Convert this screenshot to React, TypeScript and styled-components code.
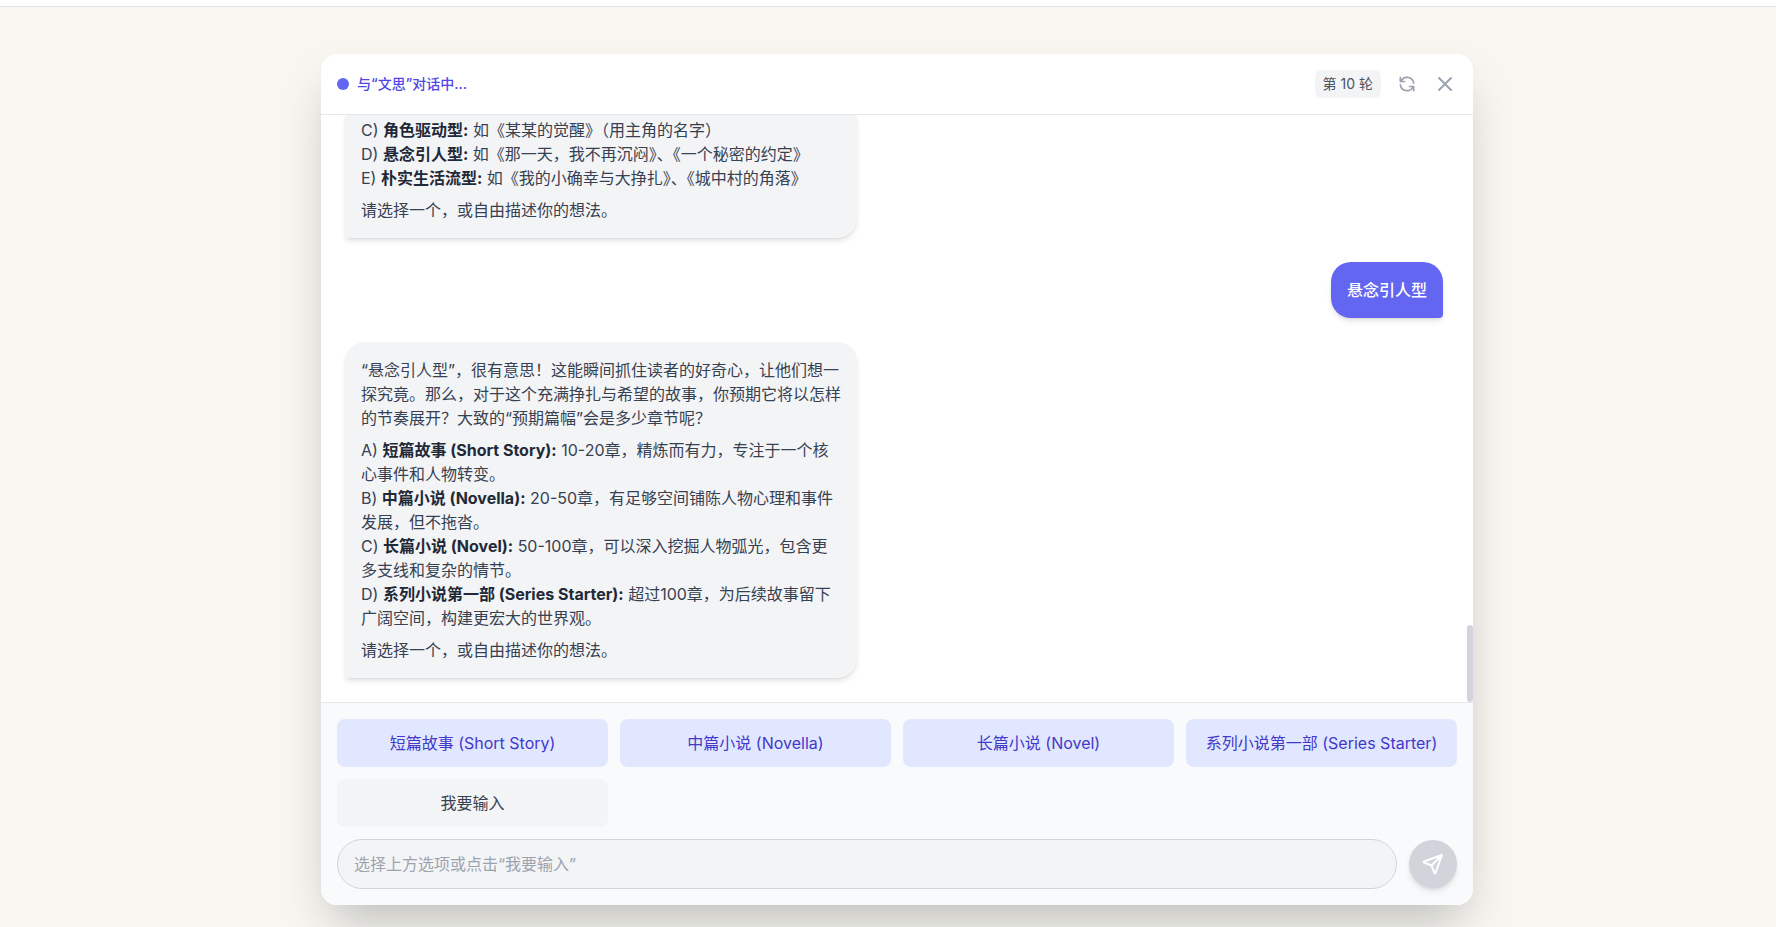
import React from 'react';
import styled, { createGlobalStyle } from 'styled-components';

const Global = createGlobalStyle`
  html, body { margin: 0; padding: 0; height: 100%; background: #f7f6f1; }
  #root { height: 100%; }
  * { box-sizing: border-box; }
  body { font-family: Inter, "Noto Sans CJK SC", "Noto Sans", sans-serif; }
`;

const Page = styled.div`
  height: 927px;
  display: flex;
  flex-direction: column;
  overflow: hidden;
`;
const TopBar = styled.div`
  height: 7px;
  flex: none;
  background: #fff;
  border-bottom: 1px solid #e2e6e3;
`;
const Stage = styled.main`
  flex: 1;
  min-height: 0;
  padding: 47px 303px 22px 321px;
`;
const Modal = styled.section`
  width: 1152px;
  height: 851px;
  display: flex;
  flex-direction: column;
  background: #fff;
  border-radius: 16px;
  overflow: hidden;
  box-shadow: 0 25px 50px -12px rgba(0, 0, 0, 0.25);
`;
const Header = styled.header`
  flex: none;
  height: 61px;
  display: flex;
  align-items: center;
  justify-content: space-between;
  padding: 0 16px;
  border-bottom: 1px solid #e5e7eb;
`;
const Status = styled.div`
  display: flex;
  align-items: center;
  gap: 8px;
  font-size: 14px;
  line-height: 20px;
  font-weight: 500;
  color: #4f46e5;
`;
const Dot = styled.span`
  flex: none;
  width: 12px;
  height: 12px;
  border-radius: 50%;
  background: #6366f1;
`;
const Tools = styled.div`
  display: flex;
  align-items: center;
  gap: 16px;
`;
const Round = styled.span`
  font-size: 14px;
  line-height: 20px;
  color: #4b5563;
  background: #f3f4f6;
  border-radius: 6px;
  padding: 4px 8px;
`;
const IconButton = styled.button`
  display: flex;
  border: 0;
  padding: 0;
  background: none;
  color: #9ca3af;
`;
const Messages = styled.div`
  position: relative;
  flex: 1;
  min-height: 0;
  overflow: hidden;
  display: flex;
  flex-direction: column;
  justify-content: flex-end;
  gap: 24px;
  padding: 0 30px 24px 24px;
`;
const Thumb = styled.div`
  position: absolute;
  right: 0;
  bottom: 0;
  width: 6px;
  height: 77px;
  border-radius: 3px;
  background: #d1d5db;
`;
const AgentBubble = styled.div`
  flex: none;
  width: 512px;
  padding: 16px;
  background: #f3f4f6;
  color: #374151;
  font-size: 16px;
  line-height: 24px;
  border-radius: 20px 20px 20px 4px;
  box-shadow: 0 4px 6px -1px rgba(0, 0, 0, 0.1), 0 2px 4px -2px rgba(0, 0, 0, 0.1);
`;
const Para = styled.p`
  margin: 0 0 8px;
  &:last-child { margin-bottom: 0; }
  strong { font-weight: 700; color: #1f2937; }
`;
const UserBubble = styled.div`
  flex: none;
  align-self: flex-end;
  padding: 16px;
  background: #6366f1;
  color: #fff;
  font-size: 16px;
  line-height: 24px;
  font-weight: 500;
  border-radius: 20px 20px 4px 20px;
  box-shadow: 0 4px 6px -1px rgba(0, 0, 0, 0.1), 0 2px 4px -2px rgba(0, 0, 0, 0.1);
`;
const Footer = styled.footer`
  flex: none;
  display: flex;
  flex-direction: column;
  gap: 12px;
  padding: 16px;
  background: #f9fafb;
  border-top: 1px solid #e5e7eb;
`;
const Options = styled.div`
  display: grid;
  grid-template-columns: repeat(4, 1fr);
  gap: 12px;
`;
const Option = styled.button<{ $muted?: boolean }>`
  height: 48px;
  border: 0;
  border-radius: 8px;
  padding: 0 0 2px;
  font: inherit;
  font-size: 16px;
  background: ${p => (p.$muted ? '#f3f4f6' : '#e0e7ff')};
  color: ${p => (p.$muted ? '#374151' : '#4338ca')};
`;
const InputRow = styled.div`
  display: flex;
  align-items: center;
  gap: 12px;
`;
const Input = styled.input`
  flex: 1;
  height: 50px;
  padding: 0 16px;
  border: 1px solid #d1d5db;
  border-radius: 25px;
  background: #f3f4f6;
  font: inherit;
  font-size: 16px;
  &::placeholder { color: #9ca3af; }
`;
const SendButton = styled.button`
  flex: none;
  width: 48px;
  height: 48px;
  border: 0;
  padding: 0;
  border-radius: 50%;
  display: flex;
  align-items: center;
  justify-content: center;
  background: #d1d5db;
  color: #fff;
  box-shadow: 0 4px 6px -1px rgba(0, 0, 0, 0.1), 0 2px 4px -2px rgba(0, 0, 0, 0.1);
`;
const Icon = styled.svg`
  display: block;
  fill: none;
  stroke: currentColor;
  stroke-width: 2;
  stroke-linecap: round;
  stroke-linejoin: round;
`;

const options = ['短篇故事 (Short Story)', '中篇小说 (Novella)', '长篇小说 (Novel)', '系列小说第一部 (Series Starter)'];

export default function App() {
  return (
    <Page>
      <Global />
      <TopBar />
      <Stage>
        <Modal>
          <Header>
            <Status>
              <Dot />
              与“文思”对话中...
            </Status>
            <Tools>
              <Round>第 10 轮</Round>
              <IconButton aria-label="重新开始">
                <Icon width={20} height={20} viewBox="0 0 24 24">
                  <path d="M4 4v5h.582m15.356 2A8.001 8.001 0 0 0 4.582 9m0 0H9m11 11v-5h-.581m0 0a8.003 8.003 0 0 1-15.357-2m15.357 2H15" />
                </Icon>
              </IconButton>
              <IconButton aria-label="关闭">
                <Icon width={24} height={24} viewBox="0 0 24 24">
                  <path d="M6 18 18 6M6 6l12 12" />
                </Icon>
              </IconButton>
            </Tools>
          </Header>
          <Messages>
            <AgentBubble>
              <Para>
                C) <strong>角色驱动型:</strong> 如《某某的觉醒》（用主角的名字）<br />
                D) <strong>悬念引人型:</strong> 如《那一天，我不再沉闷》、《一个秘密的约定》<br />
                E) <strong>朴实生活流型:</strong> 如《我的小确幸与大挣扎》、《城中村的角落》
              </Para>
              <Para>请选择一个，或自由描述你的想法。</Para>
            </AgentBubble>
            <UserBubble>悬念引人型</UserBubble>
            <AgentBubble>
              <Para>“悬念引人型”，很有意思！这能瞬间抓住读者的好奇心，让他们想一探究竟。那么，对于这个充满挣扎与希望的故事，你预期它将以怎样的节奏展开？大致的“预期篇幅”会是多少章节呢？</Para>
              <Para>
                A) <strong>短篇故事 (Short Story):</strong> 10-20章，精炼而有力，专注于一个核心事件和人物转变。<br />
                B) <strong>中篇小说 (Novella):</strong> 20-50章，有足够空间铺陈人物心理和事件发展，但不拖沓。<br />
                C) <strong>长篇小说 (Novel):</strong> 50-100章，可以深入挖掘人物弧光，包含更多支线和复杂的情节。<br />
                D) <strong>系列小说第一部 (Series Starter):</strong> 超过100章，为后续故事留下广阔空间，构建更宏大的世界观。
              </Para>
              <Para>请选择一个，或自由描述你的想法。</Para>
            </AgentBubble>
            <Thumb />
          </Messages>
          <Footer>
            <Options>
              {options.map(o => <Option key={o}>{o}</Option>)}
              <Option $muted>我要输入</Option>
            </Options>
            <InputRow>
              <Input placeholder="选择上方选项或点击“我要输入”" />
              <SendButton aria-label="发送">
                <Icon width={24} height={24} viewBox="0 0 24 24">
                  <path d="M21 3 10.5 13.5M21 3l-6.5 18a.55.55 0 0 1-1 0L10.5 13.5 3 10.5a.55.55 0 0 1 0-1Z" />
                </Icon>
              </SendButton>
            </InputRow>
          </Footer>
        </Modal>
      </Stage>
    </Page>
  );
}
